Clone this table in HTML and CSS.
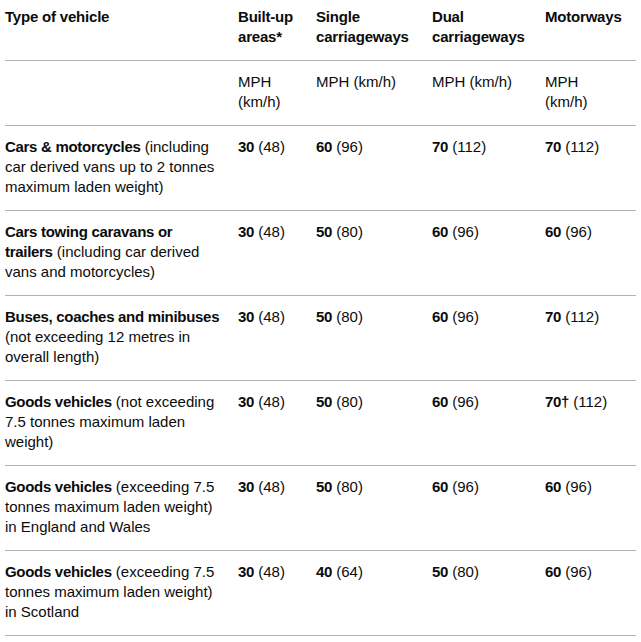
FILE: index.html
```html
<!DOCTYPE html>
<html lang="en">
<head>
<meta charset="utf-8">
<title>Speed limits</title>
<link rel="stylesheet" href="styles.css">
</head>
<body>
<table class="speed-table">
  <colgroup>
    <col class="col-type">
    <col class="col-built">
    <col class="col-single">
    <col class="col-dual">
    <col class="col-motor">
  </colgroup>
  <thead>
    <tr class="head-row">
      <th>Type of vehicle</th>
      <th>Built-up areas*</th>
      <th>Single carriageways</th>
      <th>Dual carriageways</th>
      <th>Motorways</th>
    </tr>
  </thead>
  <tbody>
    <tr>
      <td></td>
      <td>MPH (km/h)</td>
      <td>MPH (km/h)</td>
      <td>MPH (km/h)</td>
      <td>MPH (km/h)</td>
    </tr>
    <tr>
      <td><strong>Cars &amp; motorcycles</strong> (including car derived vans up to 2 tonnes maximum laden weight)</td>
      <td><strong>30</strong> (48)</td>
      <td><strong>60</strong> (96)</td>
      <td><strong>70</strong> (112)</td>
      <td><strong>70</strong> (112)</td>
    </tr>
    <tr>
      <td><strong>Cars towing caravans or trailers</strong> (including car derived vans and motorcycles)</td>
      <td><strong>30</strong> (48)</td>
      <td><strong>50</strong> (80)</td>
      <td><strong>60</strong> (96)</td>
      <td><strong>60</strong> (96)</td>
    </tr>
    <tr>
      <td><strong>Buses, coaches and minibuses</strong> (not exceeding 12 metres in overall length)</td>
      <td><strong>30</strong> (48)</td>
      <td><strong>50</strong> (80)</td>
      <td><strong>60</strong> (96)</td>
      <td><strong>70</strong> (112)</td>
    </tr>
    <tr>
      <td><strong>Goods vehicles</strong> (not exceeding 7.5 tonnes maximum laden weight)</td>
      <td><strong>30</strong> (48)</td>
      <td><strong>50</strong> (80)</td>
      <td><strong>60</strong> (96)</td>
      <td><strong>70†</strong> (112)</td>
    </tr>
    <tr>
      <td><strong>Goods vehicles</strong> (exceeding 7.5 tonnes maximum laden weight) in England and Wales</td>
      <td><strong>30</strong> (48)</td>
      <td><strong>50</strong> (80)</td>
      <td><strong>60</strong> (96)</td>
      <td><strong>60</strong> (96)</td>
    </tr>
    <tr>
      <td><strong>Goods vehicles</strong> (exceeding 7.5 tonnes maximum laden weight) in Scotland</td>
      <td><strong>30</strong> (48)</td>
      <td><strong>40</strong> (64)</td>
      <td><strong>50</strong> (80)</td>
      <td><strong>60</strong> (96)</td>
    </tr>
  </tbody>
</table>
</body>
</html>
```

FILE: styles.css
```css
html, body {
  margin: 0;
  padding: 0;
  background: #ffffff;
}

body {
  padding: 0 5px;
  font-family: "Liberation Sans", Arial, sans-serif;
  font-size: 15px;
  line-height: 20px;
  color: #0b0c0c;
}

.speed-table {
  width: 631px;
  border-collapse: collapse;
  border-spacing: 0;
  table-layout: fixed;
}

.col-type { width: 233px; }
.col-built { width: 78px; }
.col-single { width: 116px; }
.col-dual { width: 113px; }
.col-motor { width: 91px; }

.speed-table th,
.speed-table td {
  padding: 11px 17px 13px 0;
  text-align: left;
  vertical-align: top;
  border-bottom: 1px solid #b1b4b6;
  font-weight: 400;
}

.speed-table .head-row th {
  padding-top: 7px;
  font-weight: 700;
  letter-spacing: -0.2px;
}

.speed-table strong {
  font-weight: 700;
  letter-spacing: -0.3px;
}
```
